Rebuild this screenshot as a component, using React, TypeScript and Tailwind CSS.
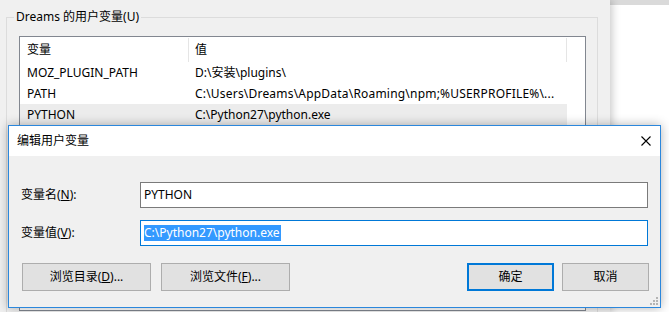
import React from "react";

const font = "[font-family:'Noto_Sans','Noto_Sans_CJK_SC',sans-serif]";

function U({ children }: { children: React.ReactNode }) {
  return <span className="underline underline-offset-1">{children}</span>;
}

export default function App() {
  return (
    <div className={`relative w-[669px] h-[312px] overflow-hidden bg-white flex text-[12px] leading-[16px] text-black ${font}`}>
      {/* background window */}
      <div className="relative z-10 w-[610px] h-full shrink-0 bg-[#f0f0f0] pt-[9px] pl-[6px] shadow-[2px_0_8px_rgba(0,0,0,0.22)]">
        <fieldset className="w-[592px] h-[400px] border border-[#dcdcdc]">
          <legend className="ml-[7px] px-[2px]">Dreams 的用户变量(U)</legend>
          <div className="ml-[12px] mt-[11px] w-[567px] h-[275px] border border-[#828790] bg-white">
            <div className="flex h-[25px]">
              <div className="w-[169px] mt-[1px] h-[24px] pl-[7px] flex items-center border-r border-[#e5e5e5]">变量</div>
              <div className="w-[378px] mt-[1px] h-[24px] pl-[6px] flex items-center border-r border-[#e5e5e5]">值</div>
            </div>
            <div className="flex h-[21px] items-center">
              <div className="w-[169px] pl-[7px]">MOZ_PLUGIN_PATH</div>
              <div className="w-[378px] pl-[6px]">D:\安装\plugins\</div>
            </div>
            <div className="flex h-[21px] items-center">
              <div className="w-[169px] pl-[7px]">PATH</div>
              <div className="w-[378px] pl-[6px] whitespace-nowrap overflow-hidden tracking-[0.2px]">C:\Users\Dreams\AppData\Roaming\npm;%USERPROFILE%\...</div>
            </div>
            <div className="flex h-[21px] w-[547px] items-center bg-[#ececec]">
              <div className="w-[169px] pl-[7px]">PYTHON</div>
              <div className="w-[378px] pl-[6px]">C:\Python27\python.exe</div>
            </div>
          </div>
        </fieldset>
      </div>

      {/* window behind on right */}
      <div className="flex-1 h-full bg-white">
        <div className="h-[5px] bg-[#dadada]" />
      </div>

      {/* dialog */}
      <div className="absolute z-20 left-[8px] top-[125px] w-[653px] h-[183px] border border-[#2b87dc] bg-[#f0f0f0] shadow-[0_0_10px_rgba(0,0,0,0.3)]">
        <div className="h-[30px] bg-white flex items-center justify-between pl-[8px] pr-[9px]">
          <span>编辑用户变量</span>
          <svg width="10" height="10" viewBox="0 0 10 10" className="block">
            <path d="M0.5 0.5 L9.5 9.5 M9.5 0.5 L0.5 9.5" stroke="#000" strokeWidth="1.1" fill="none" />
          </svg>
        </div>
        <div className="pl-[12px] pr-[11px] pt-[26px]">
          <div className="flex items-center h-[26px]">
            <div className="w-[119px]">变量名(<U>N</U>):</div>
            <div className="w-[508px] h-[26px] border border-[#7a7a7a] bg-white pl-[3px] flex items-center">PYTHON</div>
          </div>
          <div className="flex items-center h-[26px] mt-[12px]">
            <div className="w-[119px]">变量值(<U>V</U>):</div>
            <div className="w-[508px] h-[26px] border border-[#0078d7] bg-white pl-[3px] flex items-center">
              <span className="bg-[#3399ff] text-white leading-[16px] pr-[1px]">C:\Python27\python.exe</span>
            </div>
          </div>
          <div className="flex mt-[17px]">
            <button className="ml-[1px] w-[129px] h-[28px] border border-[#adadad] bg-[#e1e1e1] flex items-center justify-center">
              浏览目录(<U>D</U>)...
            </button>
            <button className="ml-[10px] w-[129px] h-[28px] border border-[#adadad] bg-[#e1e1e1] flex items-center justify-center">
              浏览文件(<U>F</U>)...
            </button>
            <div className="flex-1" />
            <button className="w-[87px] h-[28px] border-2 border-[#0078d7] bg-[#e1e1e1] flex items-center justify-center">
              确定
            </button>
            <button className="ml-[8px] w-[87px] h-[28px] border border-[#adadad] bg-[#e1e1e1] flex items-center justify-center">
              取消
            </button>
          </div>
        </div>
        <svg width="8" height="8" viewBox="0 0 8 8" className="absolute right-[2px] bottom-[2px]">
          <rect x="6" y="0" width="2" height="2" fill="#b4b4b4" />
          <rect x="3" y="3" width="2" height="2" fill="#b4b4b4" />
          <rect x="6" y="3" width="2" height="2" fill="#b4b4b4" />
          <rect x="0" y="6" width="2" height="2" fill="#b4b4b4" />
          <rect x="3" y="6" width="2" height="2" fill="#b4b4b4" />
          <rect x="6" y="6" width="2" height="2" fill="#b4b4b4" />
        </svg>
      </div>
    </div>
  );
}
